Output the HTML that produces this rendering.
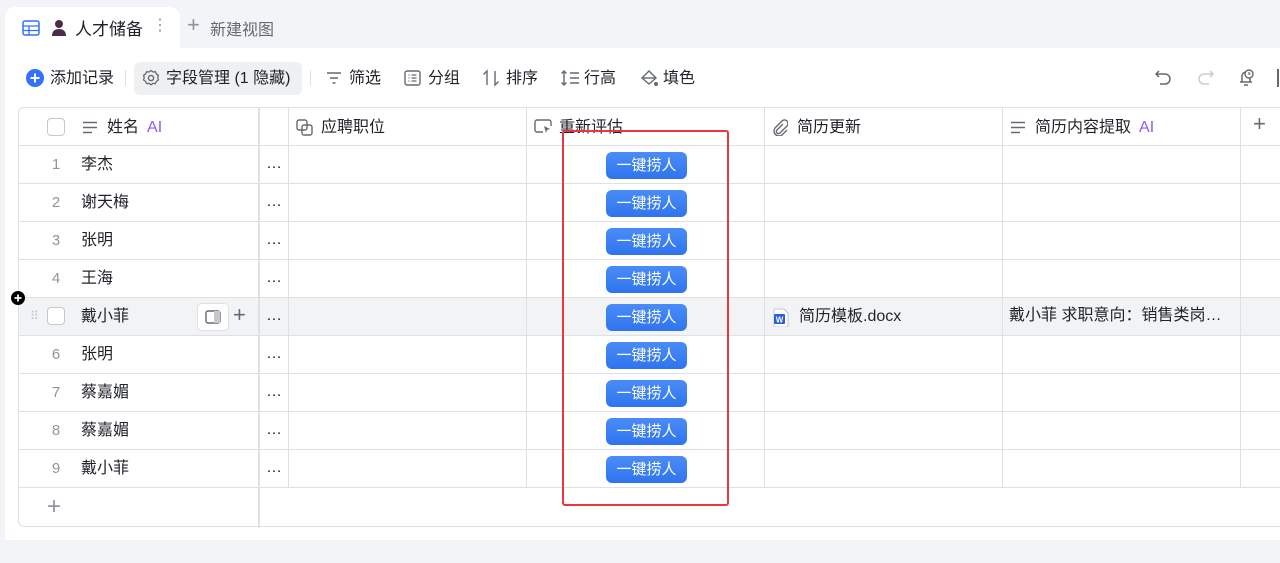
<!DOCTYPE html>
<html><head><meta charset="utf-8"><style>
*{box-sizing:border-box;margin:0;padding:0}
body{width:1280px;height:563px;overflow:hidden;background:#f2f4f8;font-family:"Liberation Sans","Noto Sans CJK SC",sans-serif;font-size:16px;color:#1f2329;position:relative}
.abs{position:absolute}
.tab{left:5px;top:7px;width:175px;height:42px;background:#fff;border-radius:10px 10px 0 0}
.panel{left:5px;top:48px;width:1275px;height:492px;background:#fff}
.tb{top:67px;height:24px;line-height:24px;font-size:16px;color:#1f2329}
.table{left:18px;top:107px;width:1262px;height:420px;border:1px solid #dee0e3;border-right:none;border-radius:6px 0 0 6px;background:#fff}
.hl{position:absolute;left:0;right:0;height:1px;background:#dee0e3}
.vl{position:absolute;top:0;width:1px;background:#dee0e3}
.cell{position:absolute;font-size:16px;line-height:20px}
.num{position:absolute;width:20px;text-align:center;color:#8f959e;font-size:15px}
.btn{position:absolute;left:587px;width:81px;height:27px;border-radius:6px;background:linear-gradient(#4a8cf7,#2f74ee);color:#fff;font-size:15px;line-height:27px;text-align:center}
.cb{position:absolute;width:18px;height:18px;border:1.5px solid #c4c7cc;border-radius:4px;background:#fff}
.hdr{position:absolute;top:10px;font-size:16px;line-height:20px;color:#1f2329}
.ai{color:#8b5cf6;margin-left:8px}
</style></head><body>
<div class="abs tab"></div>
<svg class="abs" style="left:22px;top:20px" width="18" height="16" viewBox="0 0 18 16"><rect x="1" y="1" width="16" height="14" rx="2" fill="none" stroke="#3370ff" stroke-width="1.5"/><path d="M1 6h16M1 10.5h16M7 6v9" stroke="#3370ff" stroke-width="1.3"/></svg>
<svg class="abs" style="left:51px;top:19px" width="16" height="17" viewBox="0 0 16 17"><circle cx="8" cy="5" r="4" fill="#4a2c4a"/><path d="M1 17c0-5 3-7 7-7s7 2 7 7z" fill="#4a2c4a"/></svg>
<div class="abs" style="left:75px;top:15px;font-size:17px">人才储备</div>
<div class="abs" style="left:152px;top:15px;color:#8f959e;font-size:16px">⋮</div>
<div class="abs" style="left:187px;top:12px;color:#8f959e;font-size:22px;font-weight:300">+</div>
<div class="abs" style="left:210px;top:16px;color:#646a73;font-size:16px">新建视图</div>
<div class="abs panel"></div>
<svg class="abs" style="left:26px;top:69px" width="18" height="18"><circle cx="9" cy="9" r="9" fill="#3370ff"/><path d="M9 4.5v9M4.5 9h9" stroke="#fff" stroke-width="2"/></svg>
<div class="abs tb" style="left:50px">添加记录</div>
<div class="abs" style="left:125px;top:70px;width:1px;height:16px;background:#dee0e3"></div>
<div class="abs" style="left:134px;top:62px;width:168px;height:33px;background:#eff0f2;border-radius:6px"></div>
<svg class="abs" style="left:142px;top:69px" width="18" height="18" viewBox="0 0 18 18"><circle cx="9" cy="9" r="2.6" fill="none" stroke="#646a73" stroke-width="1.4"/><path d="M9 1.5l2 1.5 2.4-.3 1 2.2 2 1.4-.6 2.4.6 2.3-2 1.4-1 2.2-2.4-.3-2 1.5-2-1.5-2.4.3-1-2.2-2-1.4.6-2.3-.6-2.4 2-1.4 1-2.2 2.4.3z" fill="none" stroke="#646a73" stroke-width="1.3"/></svg>
<div class="abs tb" style="left:166px">字段管理 (1 隐藏)</div>
<div class="abs" style="left:310px;top:70px;width:1px;height:16px;background:#dee0e3"></div>
<svg class="abs" style="left:326px;top:71px" width="16" height="14"><path d="M1 2h14M4 7h8M6.5 12h3" stroke="#646a73" stroke-width="1.5"/></svg>
<div class="abs tb" style="left:349px">筛选</div>
<svg class="abs" style="left:404px;top:70px" width="17" height="16"><rect x="1" y="1" width="15" height="14" rx="2" fill="none" stroke="#646a73" stroke-width="1.4"/><path d="M4.5 5h1M4.5 8h1M4.5 11h1M7.5 5h5M7.5 8h5M7.5 11h5" stroke="#646a73" stroke-width="1.3"/></svg>
<div class="abs tb" style="left:428px">分组</div>
<svg class="abs" style="left:482px;top:69px" width="18" height="18"><path d="M5 16V2L1.5 5.5M13 2v14l3.5-3.5" fill="none" stroke="#646a73" stroke-width="1.4"/></svg>
<div class="abs tb" style="left:506px">排序</div>
<svg class="abs" style="left:560px;top:69px" width="20" height="18"><path d="M4 2v14M1.5 4.5L4 2l2.5 2.5M1.5 13.5L4 16l2.5-2.5M10 4h9M10 9h9M10 14h9" fill="none" stroke="#646a73" stroke-width="1.4"/></svg>
<div class="abs tb" style="left:584px">行高</div>
<svg class="abs" style="left:639px;top:68px" width="20" height="20"><path d="M3 10l7-7 7 7-7 6z" fill="none" stroke="#646a73" stroke-width="1.4"/><path d="M3 10h14" stroke="#646a73" stroke-width="1.4"/><circle cx="17" cy="16" r="2" fill="#646a73"/></svg>
<div class="abs tb" style="left:663px">填色</div>
<svg class="abs" style="left:1154px;top:68px" width="18" height="18"><path d="M5 3L2 6l3 3M2 6h9a5 5 0 010 10H6" fill="none" stroke="#646a73" stroke-width="1.5"/></svg>
<svg class="abs" style="left:1197px;top:68px" width="18" height="18"><path d="M13 3l3 3-3 3M16 6H7a5 5 0 000 10h5" fill="none" stroke="#c9cdd4" stroke-width="1.5"/></svg>
<svg class="abs" style="left:1236px;top:67px" width="20" height="20"><path d="M4 15h12M6 15V9a4 4 0 018 0v6M8 18h4" fill="none" stroke="#646a73" stroke-width="1.5"/><circle cx="13" cy="7" r="4" fill="#fff" stroke="#646a73" stroke-width="1.4"/><path d="M13 5v2h1.5" stroke="#646a73" stroke-width="1.2" fill="none"/></svg>
<div class="abs" style="left:1277px;top:69px;width:2px;height:18px;background:#646a73"></div>

<div class="abs table">
 <div class="abs" style="left:0;top:189px;width:1262px;height:38px;background:#f2f3f5"></div>
 <div class="hl" style="top:37px"></div>
 <div class="hl" style="top:75px"></div><div class="hl" style="top:113px"></div><div class="hl" style="top:151px"></div><div class="hl" style="top:189px"></div><div class="hl" style="top:227px"></div><div class="hl" style="top:265px"></div><div class="hl" style="top:303px"></div><div class="hl" style="top:341px"></div><div class="hl" style="top:379px"></div>
 <div class="vl" style="left:239px;height:420px;width:2px;background:#dee0e3"></div>
 <div class="vl" style="left:269px;height:380px"></div>
 <div class="vl" style="left:507px;height:380px"></div>
 <div class="vl" style="left:745px;height:380px"></div>
 <div class="vl" style="left:983px;height:380px"></div>
 <div class="vl" style="left:1221px;height:380px"></div>
 <div class="cb" style="left:28px;top:10px"></div>
 <svg class="abs" style="left:63px;top:13px" width="16" height="13"><path d="M1 1.5h14M1 6.5h14M1 11.5h9" stroke="#646a73" stroke-width="1.5"/></svg>
 <div class="hdr" style="left:88px">姓名<span class="ai">AI</span></div>
 <svg class="abs" style="left:277px;top:11px" width="17" height="17"><rect x="1" y="1" width="10" height="10" rx="2" fill="none" stroke="#646a73" stroke-width="1.4"/><rect x="6" y="6" width="10" height="10" rx="2" fill="none" stroke="#646a73" stroke-width="1.4"/></svg>
 <div class="hdr" style="left:302px">应聘职位</div>
 <svg class="abs" style="left:515px;top:11px" width="18" height="17"><path d="M9 13H3a2 2 0 01-2-2V3a2 2 0 012-2h12a2 2 0 012 2v4" fill="none" stroke="#646a73" stroke-width="1.4"/><path d="M10 7l6 3-3 1-1 3z" fill="#646a73"/></svg>
 <div class="hdr" style="left:540px">重新评估</div>
 <svg class="abs" style="left:753px;top:11px" width="16" height="17"><path d="M11 5l-6 6a2 2 0 003 3l7-7a3.5 3.5 0 00-5-5L3 9a5 5 0 007 7l5-5" fill="none" stroke="#646a73" stroke-width="1.4"/></svg>
 <div class="hdr" style="left:778px">简历更新</div>
 <svg class="abs" style="left:991px;top:13px" width="16" height="13"><path d="M1 1.5h14M1 6.5h14M1 11.5h9" stroke="#646a73" stroke-width="1.5"/></svg>
 <div class="hdr" style="left:1016px">简历内容提取<span class="ai">AI</span></div>
 <div class="hdr" style="left:1234px;top:6px;font-size:22px;color:#646a73;font-weight:300">+</div>

 <div class="num" style="left:27px;top:48px">1</div><div class="cell" style="left:62px;top:47px">李杰</div>
 <div class="num" style="left:27px;top:86px">2</div><div class="cell" style="left:62px;top:85px">谢天梅</div>
 <div class="num" style="left:27px;top:124px">3</div><div class="cell" style="left:62px;top:123px">张明</div>
 <div class="num" style="left:27px;top:162px">4</div><div class="cell" style="left:62px;top:161px">王海</div>
 <div class="abs" style="left:11px;top:201px;color:#c4c7cc;font-size:12px;letter-spacing:-1px">⠿</div>
 <div class="cb" style="left:28px;top:199px"></div><div class="cell" style="left:62px;top:199px">戴小菲</div>
 <div class="abs" style="left:178px;top:195px;width:32px;height:28px;background:#fff;border:1px solid #dee0e3;border-radius:5px"></div>
 <svg class="abs" style="left:186px;top:202px" width="16" height="14"><rect x="1" y="1" width="14" height="12" rx="2" fill="none" stroke="#646a73" stroke-width="1.4"/><rect x="9" y="1" width="6" height="12" fill="#c4c7cc"/></svg>
 <div class="abs" style="left:214px;top:194px;font-size:22px;color:#646a73;font-weight:300">+</div>
 <div class="num" style="left:27px;top:238px">6</div><div class="cell" style="left:62px;top:237px">张明</div>
 <div class="num" style="left:27px;top:276px">7</div><div class="cell" style="left:62px;top:275px">蔡嘉媚</div>
 <div class="num" style="left:27px;top:314px">8</div><div class="cell" style="left:62px;top:313px">蔡嘉媚</div>
 <div class="num" style="left:27px;top:352px">9</div><div class="cell" style="left:62px;top:351px">戴小菲</div>
 <div class="cell" style="left:247px;top:46px">…</div>
 <div class="cell" style="left:247px;top:84px">…</div>
 <div class="cell" style="left:247px;top:122px">…</div>
 <div class="cell" style="left:247px;top:160px">…</div>
 <div class="cell" style="left:247px;top:198px">…</div>
 <div class="cell" style="left:247px;top:236px">…</div>
 <div class="cell" style="left:247px;top:274px">…</div>
 <div class="cell" style="left:247px;top:312px">…</div>
 <div class="cell" style="left:247px;top:350px">…</div>
 <div class="abs" style="left:28px;top:385px;font-size:24px;color:#8f959e;font-weight:300">+</div>

 <div class="btn" style="top:44px">一键捞人</div>
 <div class="btn" style="top:82px">一键捞人</div>
 <div class="btn" style="top:120px">一键捞人</div>
 <div class="btn" style="top:158px">一键捞人</div>
 <div class="btn" style="top:196px">一键捞人</div>
 <div class="btn" style="top:234px">一键捞人</div>
 <div class="btn" style="top:272px">一键捞人</div>
 <div class="btn" style="top:310px">一键捞人</div>
 <div class="btn" style="top:348px">一键捞人</div>

 <svg class="abs" style="left:754px;top:200px" width="16" height="19"><path d="M1 2a1 1 0 011-1h9l4 4v13a1 1 0 01-1 1H2a1 1 0 01-1-1z" fill="#fff" stroke="#c4c7cc"/><rect x="1" y="6" width="11" height="10" rx="1" fill="#2b5fd9"/><text x="6.5" y="14.5" font-size="8" fill="#fff" text-anchor="middle" font-family="Liberation Sans" font-weight="bold">W</text></svg>
 <div class="cell" style="left:780px;top:199px">简历模板.docx</div>
 <div class="cell" style="left:990px;top:198px;white-space:nowrap;width:225px;overflow:hidden">戴小菲 求职意向：销售类岗…</div>
</div>
<svg class="abs" style="left:11px;top:291px" width="14" height="14"><circle cx="7" cy="7" r="7" fill="#000"/><path d="M7 3.5v7M3.5 7h7" stroke="#fff" stroke-width="1.8"/></svg>
<div class="abs" style="left:562px;top:130px;width:167px;height:376px;border:2px solid #e8383d;border-radius:3px"></div>
</body></html>
